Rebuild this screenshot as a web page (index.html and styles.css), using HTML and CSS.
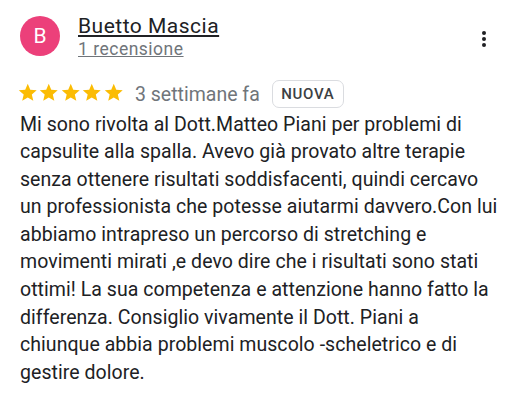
FILE: index.html
```
<!DOCTYPE html>
<html lang="it">
<head>
<meta charset="utf-8">
<link rel="stylesheet" href="styles.css">
</head>
<body>
<div class="review">
  <div class="header">
    <div class="avatar">B</div>
    <div class="who">
      <a class="name" href="#">Buetto Mascia</a>
      <a class="count" href="#">1 recensione</a>
    </div>
    <button class="more" aria-label="Altro">
      <svg width="24" height="24" viewBox="0 0 24 24"><circle cx="12" cy="6" r="2"/><circle cx="12" cy="12" r="2"/><circle cx="12" cy="18" r="2"/></svg>
    </button>
  </div>
  <div class="meta">
    <div class="stars">
      <svg viewBox="0 0 24 24"><path d="M12 17.27L18.18 21l-1.64-7.03L22 9.24l-7.19-.61L12 2 9.19 8.63 2 9.24l5.46 4.73L5.82 21z"/></svg>
      <svg viewBox="0 0 24 24"><path d="M12 17.27L18.18 21l-1.64-7.03L22 9.24l-7.19-.61L12 2 9.19 8.63 2 9.24l5.46 4.73L5.82 21z"/></svg>
      <svg viewBox="0 0 24 24"><path d="M12 17.27L18.18 21l-1.64-7.03L22 9.24l-7.19-.61L12 2 9.19 8.63 2 9.24l5.46 4.73L5.82 21z"/></svg>
      <svg viewBox="0 0 24 24"><path d="M12 17.27L18.18 21l-1.64-7.03L22 9.24l-7.19-.61L12 2 9.19 8.63 2 9.24l5.46 4.73L5.82 21z"/></svg>
      <svg viewBox="0 0 24 24"><path d="M12 17.27L18.18 21l-1.64-7.03L22 9.24l-7.19-.61L12 2 9.19 8.63 2 9.24l5.46 4.73L5.82 21z"/></svg>
    </div>
    <span class="when">3 settimane fa</span>
    <span class="badge">NUOVA</span>
  </div>
  <p class="text">Mi sono rivolta al Dott.Matteo Piani per problemi di<br>capsulite alla spalla. Avevo già provato altre terapie<br>senza ottenere risultati soddisfacenti, quindi cercavo<br>un professionista che potesse aiutarmi davvero.Con lui<br>abbiamo intrapreso un percorso di stretching e<br>movimenti mirati ,e devo dire che i risultati sono stati<br>ottimi! La sua competenza e attenzione hanno fatto la<br>differenza. Consiglio vivamente il Dott. Piani a<br>chiunque abbia problemi muscolo -scheletrico e di<br>gestire dolore.</p>
</div>
</body>
</html>
```
FILE: styles.css
```
* { box-sizing: border-box; }
html, body { margin: 0; padding: 0; background: #fff; }
body { font-family: Roboto, "Noto Sans", Arial, sans-serif; color: #202124; }
.review { padding: 16px 0 0 20px; width: 509px; }
.header { display: flex; align-items: flex-start; }
.avatar {
  width: 40px; height: 40px; border-radius: 50%;
  background: #ec407a; color: #fff;
  display: flex; align-items: center; justify-content: center;
  font-size: 21px; flex: none;
}
.who { display: flex; flex-direction: column; align-items: flex-start; margin: -2.5px 0 0 18px; flex: 1; }
.name { font-size: 21px; line-height: 24px; letter-spacing: 0.5px; color: #202124; text-decoration: underline; }
.count { font-size: 17.5px; line-height: 22px; letter-spacing: 0.5px; color: #70757a; text-decoration: underline; }
.more { border: 0; background: none; padding: 0; margin: 11px 13px 0 0; width: 24px; height: 24px; fill: #202124; }
.more svg { display: block; }
.meta { display: flex; align-items: center; margin: 20.5px 0 0 -3.5px; height: 28px; }
.stars { display: flex; fill: #fbbc04; margin-top: -2px; }
.stars svg { width: 21.5px; height: 21.5px; display: block; }
.when { font-size: 19.5px; color: #70757a; margin-left: 11px; }
.badge {
  margin-left: 12px; height: 28px; padding: 0 8.5px;
  border: 1px solid #dadce0; border-radius: 7px;
  font-size: 15px; font-weight: 500; letter-spacing: 0.7px; color: #3c4043;
  display: flex; align-items: center;
}
.text { margin: 2.5px 0 0 0; font-size: 19.5px; line-height: 27.6px; letter-spacing: 0.05px; color: #202124; white-space: nowrap; }
```
